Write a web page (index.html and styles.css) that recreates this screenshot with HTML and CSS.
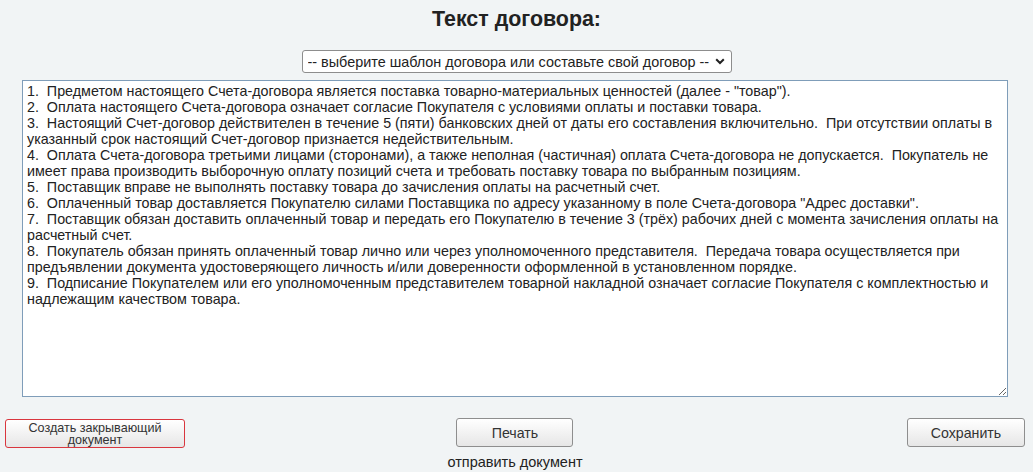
FILE: index.html
```html
<!DOCTYPE html>
<html lang="ru">
<head>
<meta charset="utf-8">
<title>Текст договора</title>
<link rel="stylesheet" href="styles.css">
</head>
<body>
<div class="page">
  <h1 class="title">Текст договора:</h1>
  <div class="select-row">
    <select class="template-select">
      <option>-- выберите шаблон договора или составьте свой договор --</option>
    </select>
  </div>
  <textarea class="contract" spellcheck="false">1.  Предметом настоящего Счета-договора является поставка товарно-материальных ценностей (далее - "товар").
2.  Оплата настоящего Счета-договора означает согласие Покупателя с условиями оплаты и поставки товара.
3.  Настоящий Счет-договор действителен в течение 5 (пяти) банковских дней от даты его составления включительно.  При отсутствии оплаты в указанный срок настоящий Счет-договор признается недействительным.
4.  Оплата Счета-договора третьими лицами (сторонами), а также неполная (частичная) оплата Счета-договора не допускается.  Покупатель не имеет права производить выборочную оплату позиций счета и требовать поставку товара по выбранным позициям.
5.  Поставщик вправе не выполнять поставку товара до зачисления оплаты на расчетный счет.
6.  Оплаченный товар доставляется Покупателю силами Поставщика по адресу указанному в поле Счета-договора "Адрес доставки".
7.  Поставщик обязан доставить оплаченный товар и передать его Покупателю в течение 3 (трёх) рабочих дней с момента зачисления оплаты на расчетный счет.
8.  Покупатель обязан принять оплаченный товар лично или через уполномоченного представителя.  Передача товара осуществляется при предъявлении документа удостоверяющего личность и/или доверенности оформленной в установленном порядке.
9.  Подписание Покупателем или его уполномоченным представителем товарной накладной означает согласие Покупателя с комплектностью и надлежащим качеством товара.</textarea>
  <div class="actions">
    <button class="btn btn-close-doc">Создать закрывающий<br>документ</button>
    <div class="middle">
      <button class="btn btn-print">Печать</button>
      <span class="send">отправить документ</span>
    </div>
    <button class="btn btn-save">Сохранить</button>
  </div>
</div>
</body>
</html>
```
FILE: styles.css
```css
html, body {
  margin: 0;
  padding: 0;
  background: #f1f4f5;
  font-family: "Liberation Sans", Arial, sans-serif;
  color: #222;
}

.page {
  width: 1033px;
  height: 472px;
  overflow: hidden;
}

.title {
  margin: 0;
  padding-top: 6px;
  height: 43px;
  box-sizing: border-box;
  text-align: center;
  font-size: 21.4px;
  line-height: 26px;
  font-weight: bold;
  color: #222;
}

.select-row {
  display: flex;
  justify-content: center;
  height: 37px;
  padding-top: 7px;
  box-sizing: border-box;
}

.template-select {
  -webkit-appearance: none;
  appearance: none;
  width: 430px;
  height: 23px;
  font-family: "Liberation Sans", Arial, sans-serif;
  font-size: 14.4px;
  color: #222;
  background: #fff url("data:image/svg+xml,%3Csvg xmlns='http://www.w3.org/2000/svg' width='10' height='7' viewBox='0 0 10 7'%3E%3Cpath d='M1.2 1.2 L5 5 L8.8 1.2' fill='none' stroke='%23222' stroke-width='2'/%3E%3C/svg%3E") no-repeat right 6px center;
  border: 1px solid #8d8d8d;
  border-radius: 3px;
  padding: 0 20px 0 5px;
}

.contract {
  display: block;
  margin: 0 0 0 22px;
  width: 986px;
  height: 317px;
  box-sizing: border-box;
  border: 1px solid #7f9db9;
  border-radius: 0;
  background: #fff;
  padding: 2px 3px 2px 4px;
  font-family: "Liberation Sans", Arial, sans-serif;
  font-size: 14.3px;
  line-height: 16px;
  color: #222;
  resize: both;
  outline: none;
}

.actions {
  display: grid;
  grid-template-columns: 1fr auto 1fr;
  align-items: start;
  padding: 21px 8px 0 5px;
}

.middle {
  display: flex;
  flex-direction: column;
  align-items: center;
}

.btn {
  font-family: "Liberation Sans", Arial, sans-serif;
  color: #333;
  background: linear-gradient(#ffffff, #e6e6e6);
  border: 1px solid #8e8e8e;
  border-radius: 3px;
  height: 29px;
  padding: 0;
  cursor: pointer;
}

.btn-close-doc {
  justify-self: start;
  width: 180px;
  font-size: 12.6px;
  line-height: 12px;
  border-color: #d9363e;
  margin-top: 1px;
}

.btn-print {
  width: 117px;
  font-size: 14.2px;
}

.btn-save {
  justify-self: end;
  width: 118px;
  font-size: 14.2px;
}

.send {
  margin-top: 7px;
  font-size: 14.5px;
  line-height: 17px;
  color: #222;
}
```
